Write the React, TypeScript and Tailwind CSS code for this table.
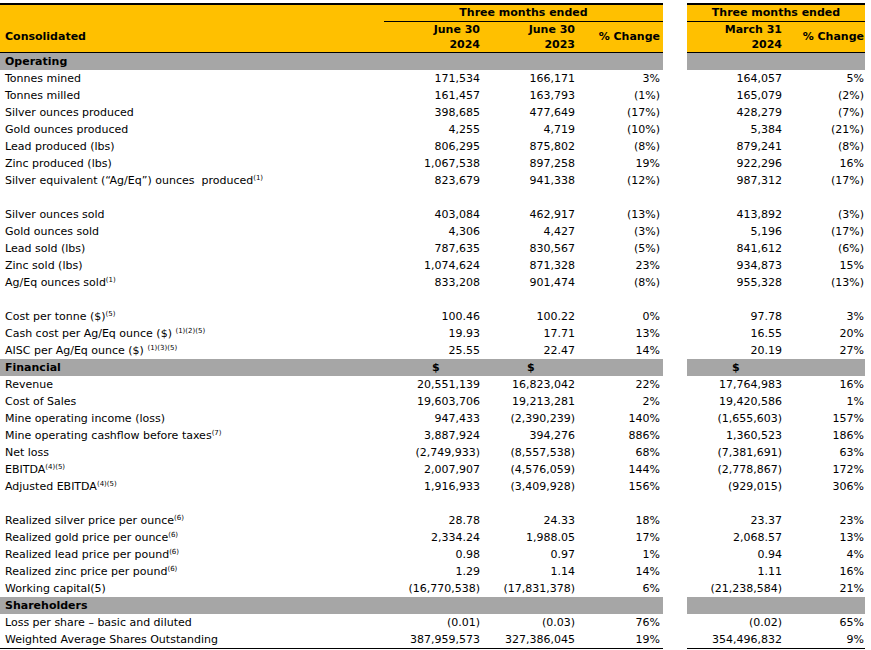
import { ReactNode } from "react";

type Line =
  | { kind: "row"; label: ReactNode; values: string[]; last?: boolean }
  | { kind: "blank" }
  | { kind: "section"; title: string; dollars?: boolean };

const grid = "grid grid-cols-[384px_99px_95px_85px_24px_98px_80px]";

const Sup = ({ children }: { children: ReactNode }) => (
  <sup className="text-[7px] top-[-4px]">{children}</sup>
);

const lines: Line[] = [
  { kind: "section", title: "Operating" },
  { kind: "row", label: "Tonnes mined", values: ["171,534", "166,171", "3%", "164,057", "5%"] },
  { kind: "row", label: "Tonnes milled", values: ["161,457", "163,793", "(1%)", "165,079", "(2%)"] },
  { kind: "row", label: "Silver ounces produced", values: ["398,685", "477,649", "(17%)", "428,279", "(7%)"] },
  { kind: "row", label: "Gold ounces produced", values: ["4,255", "4,719", "(10%)", "5,384", "(21%)"] },
  { kind: "row", label: "Lead produced (lbs)", values: ["806,295", "875,802", "(8%)", "879,241", "(8%)"] },
  { kind: "row", label: "Zinc produced (lbs)", values: ["1,067,538", "897,258", "19%", "922,296", "16%"] },
  {
    kind: "row",
    label: (
      <>
        Silver equivalent (“Ag/Eq”) ounces&nbsp; produced<Sup>(1)</Sup>
      </>
    ),
    values: ["823,679", "941,338", "(12%)", "987,312", "(17%)"],
  },
  { kind: "blank" },
  { kind: "row", label: "Silver ounces sold", values: ["403,084", "462,917", "(13%)", "413,892", "(3%)"] },
  { kind: "row", label: "Gold ounces sold", values: ["4,306", "4,427", "(3%)", "5,196", "(17%)"] },
  { kind: "row", label: "Lead sold (lbs)", values: ["787,635", "830,567", "(5%)", "841,612", "(6%)"] },
  { kind: "row", label: "Zinc sold (lbs)", values: ["1,074,624", "871,328", "23%", "934,873", "15%"] },
  {
    kind: "row",
    label: (
      <>
        Ag/Eq ounces sold<Sup>(1)</Sup>
      </>
    ),
    values: ["833,208", "901,474", "(8%)", "955,328", "(13%)"],
  },
  { kind: "blank" },
  {
    kind: "row",
    label: (
      <>
        Cost per tonne ($)<Sup>(5)</Sup>
      </>
    ),
    values: ["100.46", "100.22", "0%", "97.78", "3%"],
  },
  {
    kind: "row",
    label: (
      <>
        Cash cost per Ag/Eq ounce ($) <Sup>(1)(2)(5)</Sup>
      </>
    ),
    values: ["19.93", "17.71", "13%", "16.55", "20%"],
  },
  {
    kind: "row",
    label: (
      <>
        AISC per Ag/Eq ounce ($) <Sup>(1)(3)(5)</Sup>
      </>
    ),
    values: ["25.55", "22.47", "14%", "20.19", "27%"],
  },
  { kind: "section", title: "Financial", dollars: true },
  { kind: "row", label: "Revenue", values: ["20,551,139", "16,823,042", "22%", "17,764,983", "16%"] },
  { kind: "row", label: "Cost of Sales", values: ["19,603,706", "19,213,281", "2%", "19,420,586", "1%"] },
  { kind: "row", label: "Mine operating income (loss)", values: ["947,433", "(2,390,239)", "140%", "(1,655,603)", "157%"] },
  {
    kind: "row",
    label: (
      <>
        Mine operating cashflow before taxes<Sup>(7)</Sup>
      </>
    ),
    values: ["3,887,924", "394,276", "886%", "1,360,523", "186%"],
  },
  { kind: "row", label: "Net loss", values: ["(2,749,933)", "(8,557,538)", "68%", "(7,381,691)", "63%"] },
  {
    kind: "row",
    label: (
      <>
        EBITDA<Sup>(4)(5)</Sup>
      </>
    ),
    values: ["2,007,907", "(4,576,059)", "144%", "(2,778,867)", "172%"],
  },
  {
    kind: "row",
    label: (
      <>
        Adjusted EBITDA<Sup>(4)(5)</Sup>
      </>
    ),
    values: ["1,916,933", "(3,409,928)", "156%", "(929,015)", "306%"],
  },
  { kind: "blank" },
  {
    kind: "row",
    label: (
      <>
        Realized silver price per ounce<Sup>(6)</Sup>
      </>
    ),
    values: ["28.78", "24.33", "18%", "23.37", "23%"],
  },
  {
    kind: "row",
    label: (
      <>
        Realized gold price per ounce<Sup>(6)</Sup>
      </>
    ),
    values: ["2,334.24", "1,988.05", "17%", "2,068.57", "13%"],
  },
  {
    kind: "row",
    label: (
      <>
        Realized lead price per pound<Sup>(6)</Sup>
      </>
    ),
    values: ["0.98", "0.97", "1%", "0.94", "4%"],
  },
  {
    kind: "row",
    label: (
      <>
        Realized zinc price per pound<Sup>(6)</Sup>
      </>
    ),
    values: ["1.29", "1.14", "14%", "1.11", "16%"],
  },
  { kind: "row", label: "Working capital(5)", values: ["(16,770,538)", "(17,831,378)", "6%", "(21,238,584)", "21%"] },
  { kind: "section", title: "Shareholders" },
  { kind: "row", label: "Loss per share – basic and diluted", values: ["(0.01)", "(0.03)", "76%", "(0.02)", "65%"] },
  {
    kind: "row",
    label: "Weighted Average Shares Outstanding",
    values: ["387,959,573", "327,386,045", "19%", "354,496,832", "9%"],
    last: true,
  },
];

const Header = () => (
  <>
    <div className={`${grid} h-[2px]`}>
      <div className="col-span-4 bg-black" />
      <div />
      <div className="col-span-2 bg-black" />
    </div>
    <div className={`${grid} grid-rows-[17px_15px_16px] font-bold`}>
      <div className="col-start-1 row-start-1 bg-[#ffc000]" />
      <div className="col-start-2 col-span-3 row-start-1 flex items-center justify-center border-b border-black bg-[#ffc000]">
        Three months ended
      </div>
      <div className="col-start-6 col-span-2 row-start-1 flex items-center justify-center border-b border-black bg-[#ffc000]">
        Three months ended
      </div>
      <div className="col-start-1 row-start-2 row-span-2 flex items-center border-b border-black bg-[#ffc000] pl-[5px]">
        Consolidated
      </div>
      {[
        { col: "col-start-2", top: "June 30", bottom: "2024" },
        { col: "col-start-3", top: "June 30", bottom: "2023" },
        { col: "col-start-6", top: "March 31", bottom: "2024" },
      ].map((h) => (
        <div
          key={h.col + h.bottom}
          className={`${h.col} row-start-2 row-span-2 flex flex-col justify-center border-b border-black bg-[#ffc000] pr-[3px] text-right leading-[15px]`}
        >
          <span>{h.top}</span>
          <span>{h.bottom}</span>
        </div>
      ))}
      <div className="col-start-4 row-start-2 row-span-2 flex items-center justify-end border-b border-black bg-[#ffc000] pr-[3px]">
        % Change
      </div>
      <div className="col-start-7 row-start-2 row-span-2 flex items-center justify-end border-b border-black bg-[#ffc000] pr-[1px]">
        % Change
      </div>
    </div>
  </>
);

const Section = ({ title, dollars }: { title: string; dollars?: boolean }) => (
  <div className={`${grid} h-[17px] font-bold leading-[17px]`}>
    <div className="bg-[#a6a6a6] pl-[5px]">{title}</div>
    <div className="bg-[#a6a6a6] pl-[48px]">{dollars ? "$" : ""}</div>
    <div className="bg-[#a6a6a6] pl-[44px]">{dollars ? "$" : ""}</div>
    <div className="bg-[#a6a6a6]" />
    <div />
    <div className="bg-[#a6a6a6] pl-[45px]">{dollars ? "$" : ""}</div>
    <div className="bg-[#a6a6a6]" />
  </div>
);

const DataRow = ({ label, values, last }: { label: ReactNode; values: string[]; last?: boolean }) => {
  const line = last ? "border-b border-black" : "";
  return (
    <div className={`${grid} h-[17px] leading-[17px]`}>
      <div className={`whitespace-nowrap pl-[5px] ${line}`}>{label}</div>
      <div className={`whitespace-nowrap pr-[3px] text-right ${line}`}>{values[0]}</div>
      <div className={`whitespace-nowrap pr-[3px] text-right ${line}`}>{values[1]}</div>
      <div className={`whitespace-nowrap pr-[3px] text-right ${line}`}>{values[2]}</div>
      <div />
      <div className={`whitespace-nowrap pr-[3px] text-right ${line}`}>{values[3]}</div>
      <div className={`whitespace-nowrap pr-[1px] text-right ${line}`}>{values[4]}</div>
    </div>
  );
};

export default function App() {
  return (
    <div className="min-h-[650px] w-[871px] bg-white pt-[3px] font-['DejaVu_Sans',sans-serif] text-[11px] text-black">
      <Header />
      {lines.map((l, i) => {
        if (l.kind === "blank") return <div key={i} className="h-[17px]" />;
        if (l.kind === "section") return <Section key={i} title={l.title} dollars={l.dollars} />;
        return <DataRow key={i} label={l.label} values={l.values} last={l.last} />;
      })}
    </div>
  );
}
